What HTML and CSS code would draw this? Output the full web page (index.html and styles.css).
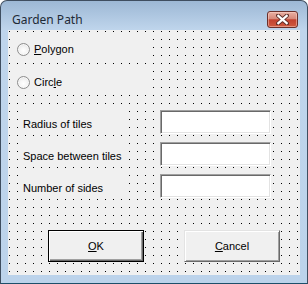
FILE: index.html
```html
<!DOCTYPE html>
<html>
<head>
<meta charset="utf-8">
<link rel="stylesheet" href="styles.css">
</head>
<body>
<div class="window">
  <div class="titlebar">
    <span class="title">Garden Path</span>
    <span class="close">
      <svg width="13" height="11" viewBox="0 0 13 11">
        <path d="M2 1.5 L11 9.5 M11 1.5 L2 9.5" stroke="#5a2a25" stroke-width="4" stroke-linecap="round"/>
        <path d="M2.3 1.8 L10.7 9.2 M10.7 1.8 L2.3 9.2" stroke="#ffffff" stroke-width="2.2" stroke-linecap="square"/>
      </svg>
    </span>
  </div>
  <div class="client">
    <div class="options">
      <div class="option"><span class="radio"></span><span class="otext"><u>P</u>olygon</span></div>
      <div class="option option-b"><span class="radio"></span><span class="otext">Circ<u>l</u>e</span></div>
    </div>
    <div class="fields">
      <div class="lbl">Radius of tiles</div><div class="tb"></div>
      <div class="lbl">Space between tiles</div><div class="tb"></div>
      <div class="lbl">Number of sides</div><div class="tb"></div>
    </div>
    <div class="buttons">
      <div class="btn btn-default"><span class="btn-inner"><u>O</u>K</span></div>
      <div class="btn"><span class="btn-inner"><u>C</u>ancel</span></div>
    </div>
  </div>
</div>
</body>
</html>
```
FILE: styles.css
```css
html, body {
  margin: 0;
  padding: 0;
  background: #ffffff;
}
.window {
  width: 308px;
  height: 284px;
  box-sizing: border-box;
  border: 1px solid #3f4e60;
  border-bottom-color: #1d4f6a;
  border-radius: 7px 7px 0 0;
  background: linear-gradient(#9db8d5 0px, #bfd5ec 29px, #bcd3eb 100%);
  display: flex;
  flex-direction: column;
  font-family: "Liberation Sans", Arial, sans-serif;
  font-size: 11px;
  color: #000;
}
.titlebar {
  height: 29px;
  box-sizing: border-box;
  padding: 8px 9px 0 11px;
  display: flex;
  align-items: center;
}
.title {
  font-family: "Noto Sans", "Liberation Sans", sans-serif;
  font-size: 12px;
  color: #1e2a36;
}
.close {
  margin-left: auto;
  width: 31px;
  height: 17px;
  box-sizing: border-box;
  border: 1px solid #6a2f2a;
  border-radius: 3px;
  background: linear-gradient(#e9b0a3 0%, #d7897a 45%, #c2412f 52%, #cf5a40 100%);
  box-shadow: inset 0 0 0 1px rgba(255, 220, 210, 0.45);
  display: flex;
  align-items: center;
  justify-content: center;
}
.close svg { display: block; }
.client {
  flex: 1;
  margin: 0 7px 8px 7px;
  background-color: #f0f0f0;
  background-image: conic-gradient(from 270deg at 1px 1px, #000 90deg, transparent 0);
  background-size: 8px 8px;
  background-position: 1px 1px;
  display: flex;
  flex-direction: column;
}
.options {
  display: flex;
  flex-direction: column;
  gap: 9px;
  padding: 7px 0 0 6px;
}
.option {
  width: 136px;
  height: 24px;
  box-sizing: border-box;
  padding-left: 3px;
  background: #f0f0f0;
  display: flex;
  align-items: center;
  gap: 4px;
}
.radio {
  width: 13px;
  height: 13px;
  box-sizing: border-box;
  border-radius: 50%;
  border: 1px solid #8d8d8d;
  background: radial-gradient(circle at 50% 60%, #ffffff 0%, #f4f4f4 45%, #d4d4d4 100%);
  box-shadow: inset 0 0 0 1px #f8f8f8;
}
.fields {
  margin: 16px 0 0 13px;
  display: grid;
  grid-template-columns: 104px 111px;
  grid-auto-rows: 24px;
  column-gap: 35px;
  row-gap: 8px;
}
.lbl {
  background: #f0f0f0;
  padding: 8px 0 0 2px;
  line-height: 13px;
  white-space: nowrap;
}
.tb {
  background: #ffffff;
  box-sizing: border-box;
  border-top: 1px solid #a0a0a0;
  border-left: 1px solid #a0a0a0;
  border-right: 1px solid #ffffff;
  border-bottom: 1px solid #ffffff;
  box-shadow: inset 1px 1px 0 #696969, inset -1px -1px 0 #e3e3e3;
}
.buttons {
  display: flex;
  gap: 40px;
  margin: 32px 0 0 40px;
}
.btn {
  width: 96px;
  height: 32px;
  box-sizing: border-box;
  background: #f0f0f0;
  border-top: 1px solid #e3e3e3;
  border-left: 1px solid #e3e3e3;
  border-right: 1px solid #696969;
  border-bottom: 1px solid #696969;
  box-shadow: inset 1px 1px 0 #ffffff, inset -1px -1px 0 #a0a0a0;
  display: flex;
  align-items: center;
  justify-content: center;
}
.btn-default {
  border: 1px solid #000;
  box-shadow: inset 1px 1px 0 #ffffff, inset -1px -1px 0 #696969, inset -2px -2px 0 #a0a0a0;
}
.btn-inner {
  line-height: 13px;
}
u {
  text-decoration: underline;
  text-underline-offset: 1px;
}
```
